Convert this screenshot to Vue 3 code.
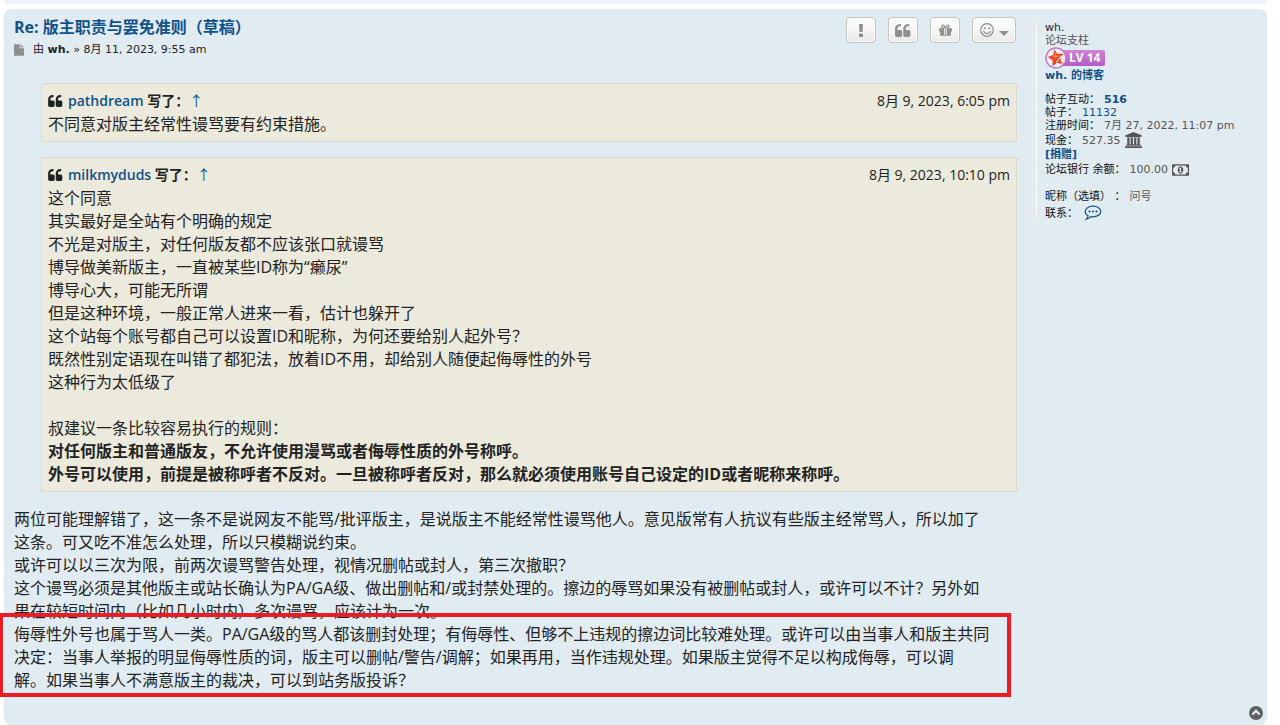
<script setup>
const quotes = [
  {
    author: 'pathdream',
    date: '8月 9, 2023, 6:05 pm',
    lines: [{ text: '不同意对版主经常性谩骂要有约束措施。' }],
  },
  {
    author: 'milkmyduds',
    date: '8月 9, 2023, 10:10 pm',
    lines: [
      { text: '这个同意' },
      { text: '其实最好是全站有个明确的规定' },
      { text: '不光是对版主，对任何版友都不应该张口就谩骂' },
      { text: '博导做美新版主，一直被某些ID称为“癞尿”' },
      { text: '博导心大，可能无所谓' },
      { text: '但是这种环境，一般正常人进来一看，估计也躲开了' },
      { text: '这个站每个账号都自己可以设置ID和昵称，为何还要给别人起外号？' },
      { text: '既然性别定语现在叫错了都犯法，放着ID不用，却给别人随便起侮辱性的外号' },
      { text: '这种行为太低级了' },
      { text: '' },
      { text: '叔建议一条比较容易执行的规则：' },
      { text: '对任何版主和普通版友，不允许使用漫骂或者侮辱性质的外号称呼。', bold: true },
      { text: '外号可以使用，前提是被称呼者不反对。一旦被称呼者反对，那么就必须使用账号自己设定的ID或者昵称来称呼。', bold: true },
    ],
  },
]

const reply = [
  '两位可能理解错了，这一条不是说网友不能骂/批评版主，是说版主不能经常性谩骂他人。意见版常有人抗议有些版主经常骂人，所以加了',
  '这条。可又吃不准怎么处理，所以只模糊说约束。',
  '或许可以以三次为限，前两次谩骂警告处理，视情况删帖或封人，第三次撤职？',
  '这个谩骂必须是其他版主或站长确认为PA/GA级、做出删帖和/或封禁处理的。擦边的辱骂如果没有被删帖或封人，或许可以不计？另外如',
  '果在较短时间内（比如几小时内）多次谩骂，应该计为一次。',
]

const marked = [
  '侮辱性外号也属于骂人一类。PA/GA级的骂人都该删封处理；有侮辱性、但够不上违规的擦边词比较难处理。或许可以由当事人和版主共同',
  '决定：当事人举报的明显侮辱性质的词，版主可以删帖/警告/调解；如果再用，当作违规处理。如果版主觉得不足以构成侮辱，可以调',
  '解。如果当事人不满意版主的裁决，可以到站务版投诉？',
]

const quotePath =
  'M704 960v384q0 80-56 136t-136 56h-384q-80 0-136-56t-56-136v-704q0-104 40-198t110-164 163-109 199-41h64q26 0 45 19t19 45v128q0 26-19 45t-45 19h-64q-106 0-181 75t-75 181v32q0 40 28 68t68 28h224q80 0 136 56t56 136z'
</script>

<template>
  <main class="page">
    <div class="previous"></div>
    <article class="post">
      <div class="columns">
        <section class="body">
          <header class="head">
            <div>
              <h1><a href="#post">Re: 版主职责与罢免准则（草稿）</a></h1>
              <p class="byline">
                <svg class="file" viewBox="128 0 1536 1792" aria-hidden="true">
                  <path d="M1152 512v-472q22 14 36 28l408 408q14 14 28 36h-472zm-128 32q0 40 28 68t68 28h544v1056q0 40-28 68t-68 28h-1344q-40 0-68-28t-28-68v-1600q0-40 28-68t68-28h800v544z" />
                </svg>
                <span>由 <a class="user" href="#wh">wh.</a> » 8月 11, 2023, 9:55 am</span>
              </p>
            </div>
            <div class="actions">
              <button type="button" aria-label="举报">
                <svg width="6" height="13" viewBox="0 0 6 13"><path d="M1 0h4l-.5 8h-3z" /><rect x="1" y="9.500" width="4" height="3.500" rx=".6" /></svg>
              </button>
              <button type="button" aria-label="引用">
                <svg width="16" height="13" viewBox="-64 128 1728 1408"><path :d="quotePath" /><path :d="quotePath" transform="translate(896 0)" /></svg>
              </button>
              <button type="button" aria-label="赠送">
                <svg width="15" height="15" viewBox="0 0 1792 1792"><path d="M1056 1356v-716h-320v716q0 25 18 38.500t46 13.500h192q28 0 46-13.500t18-38.500zm-456-844h195l-126-161q-26-31-69-31-40 0-68 28t-28 68 28 68 68 28zm688-96q0-40-28-68t-68-28q-43 0-69 31l-125 161h194q40 0 68-28t28-68zm376 256v320q0 14-9 23t-23 9h-96v416q0 40-28 68t-68 28h-1088q-40 0-68-28t-28-68v-416h-96q-14 0-23-9t-9-23v-320q0-14 9-23t23-9h440q-93 0-158.500-65.500t-65.500-158.500 65.500-158.500 158.500-65.500q107 0 168 77l128 165 128-165q61-77 168-77 93 0 158.500 65.500t65.500 158.500-65.500 158.500-158.500 65.500h440q14 0 23 9t9 23z" /><rect x="850" y="640" width="92" height="770" /></svg>
              </button>
              <button type="button" class="wide" aria-label="表情">
                <svg width="14" height="14" viewBox="0 0 14 14"><circle cx="7" cy="7" r="6.300" fill="none" stroke="#8f8f8f" stroke-width="1.200" /><circle cx="4.800" cy="5.200" r="1" /><circle cx="9.200" cy="5.200" r="1" /><path d="M3.500 8.300q1.200 2.300 3.500 2.300t3.500-2.300" fill="none" stroke="#8f8f8f" stroke-width="1.200" stroke-linecap="round" /></svg>
                <svg class="caret" width="10" height="5" viewBox="0 0 10 5"><path d="M0 0h10l-5 5z" /></svg>
              </button>
            </div>
          </header>

          <div class="content">
            <blockquote v-for="q in quotes" :key="q.author">
              <div class="cite">
                <svg width="15" height="12" viewBox="-64 128 1728 1408" aria-hidden="true"><path :d="quotePath" /><path :d="quotePath" transform="translate(896 0)" /></svg>
                <cite><a href="#author">{{ q.author }}</a> 写了：</cite>
                <a class="arrow" href="#source">↑</a>
                <time>{{ q.date }}</time>
              </div>
              <p v-for="(l, i) in q.lines" :key="i" :class="{ bold: l.bold }">{{ l.text }}</p>
            </blockquote>
            <p v-for="(l, i) in reply" :key="i">{{ l }}</p>
            <div class="marked">
              <p v-for="(l, i) in marked" :key="i">{{ l }}</p>
            </div>
          </div>
        </section>

        <aside class="profile">
          <div><a class="name" href="#wh">wh.</a></div>
          <div class="muted">论坛支柱</div>
          <div class="badge">
            <svg width="22" height="22" viewBox="0 0 22 22" aria-hidden="true">
              <circle cx="11" cy="11" r="10" fill="#fbf1f1" stroke="#b87bcd" stroke-width="1.500" />
              <path d="M9.500 3.200l2.800 4.100 5.500-.3-2.500 4.200 2.200 5.200-5-1.300-4.600 3.500.1-5.300-4.500-3.400 5-1.600z" fill="#ee4426" stroke="#d8321b" stroke-width=".6" />
              <path d="M9.600 5.300l1.900 3.400 3.500.1-3.400 1.800-5.300-.7 3-1z" fill="#ff8b51" />
              <path d="M12 15.500l3.300-4v6M11.800 15.500h4.700" fill="none" stroke="#fff" stroke-width="2.400" />
              <path d="M12.500 15.300l2.600-3v4.700M12.500 15.300h3.600" fill="none" stroke="#e43824" stroke-width="1.200" />
            </svg>
            <span>LV 14</span>
          </div>
          <div class="blog"><a class="strong" href="#blog">wh. 的博客</a></div>
          <dl>
            <div><dt>帖子互动：</dt><dd><a class="strong" href="#likes">516</a></dd></div>
            <div><dt>帖子：</dt><dd><a href="#posts">11132</a></dd></div>
            <div><dt>注册时间：</dt><dd>7月 27, 2022, 11:07 pm</dd></div>
            <div class="cash">
              <dt>现金：</dt>
              <dd>527.35
                <svg width="17" height="16" viewBox="0 0 1920 1792" aria-hidden="true"><path d="M960 0l960 384v128h-128q0 26-20 45t-49 19h-1526q-28 0-48-19t-21-45h-128v-128zm-704 640h256v768h128v-768h256v768h128v-768h256v768h128v-768h256v768h59q28 0 48 19t21 45v64h-1664v-64q0-26 20-45t49-19h59v-768zm1595 960q28 0 48 19t21 45v128h-1920v-128q0-26 20-45t49-19h1782z" /></svg>
              </dd>
            </div>
            <div><dd><a class="strong" href="#donate">[捐赠]</a></dd></div>
            <div class="bank">
              <dt>论坛银行 余额：</dt>
              <dd>100.00
                <svg width="17" height="16" viewBox="0 0 1920 1792" aria-hidden="true"><path d="M768 1152h384v-96h-128v-448h-114l-148 137 77 80q42-37 55-57h2v288h-128v96zm512-256q0 70-21 142t-59 134-102 101-138 39-138-39-102-101-59-134-21-142 21-142 59-134 102-101 138-39 138 39 102 101 59 134 21 142zm512 256v-512q-106 0-181-75t-75-181h-1152q0 106-75 181t-181 75v512q106 0 181 75t75 181h1152q0-106 75-181t181-75zm128-832v1152q0 26-19 45t-45 19h-1792q-26 0-45-19t-19-45v-1152q0-26 19-45t45-19h1792q26 0 45 19t19 45z" /></svg>
              </dd>
            </div>
            <div class="nick"><dt>昵称（选填） ：</dt><dd>问号</dd></div>
            <div class="contact">
              <dt>联系：</dt>
              <dd>
                <a href="#contact" aria-label="联系 wh.">
                  <svg width="18" height="16" viewBox="0 0 18 16"><path d="M9 1.200c4.300 0 7.800 2.300 7.800 5.300s-3.500 5.400-7.800 5.400q-1 0-2-.2-1.800 1.800-4.600 2.400 1.600-1.400 1.700-3.300c-1.800-1-2.900-2.500-2.900-4.300 0-3 3.500-5.300 7.800-5.300z" fill="none" stroke="#105289" stroke-width="1.200" /><circle cx="5.500" cy="6.500" r="1.100" /><circle cx="9" cy="6.500" r="1.100" /><circle cx="12.500" cy="6.500" r="1.100" /></svg>
                </a>
              </dd>
            </div>
          </dl>
        </aside>
      </div>
      <a class="top" href="#top" aria-label="页首">
        <svg width="14" height="14" viewBox="0 0 14 14"><circle cx="7" cy="7" r="7" fill="#606060" /><path d="M3.300 8.500l3.700-3.600 3.700 3.600" fill="none" stroke="#e1ebf2" stroke-width="2.200" /></svg>
      </a>
    </article>
  </main>
</template>

<style>
body {
  margin: 0;
  background: #fff;
}
</style>

<style scoped>
* {
  box-sizing: border-box;
}
.page {
  display: flex;
  flex-direction: column;
  gap: 5px;
  min-height: 100vh;
  padding: 0 13px 0 4px;
  color: #222;
  font-family: "DejaVu Sans", "Noto Sans CJK SC", sans-serif;
  font-size: 11px;
  line-height: 13px;
}
p, h1, dl, dd, blockquote {
  margin: 0;
}
a {
  color: #105289;
  text-decoration: none;
}
svg {
  display: block;
  fill: currentColor;
}
.previous {
  height: 4px;
  background: #ecf3f7;
  border-radius: 0 0 7px 7px;
}
.post {
  flex: 1;
  display: flex;
  flex-direction: column;
  padding: 8px 4px 5px 10px;
  background: #e1ebf2;
  border-radius: 7px;
}
.columns {
  display: flex;
  gap: 19px;
}
.body {
  flex: 1;
  min-width: 0;
}
.head {
  display: flex;
  justify-content: space-between;
  height: 50px;
}
h1 {
  font: bold 16px/20px "Open Sans", "Noto Sans CJK SC", sans-serif;
}
.byline {
  display: flex;
  align-items: center;
  gap: 9px;
  margin-top: 5px;
  line-height: 16px;
}
.file {
  width: 10px;
  height: 12px;
  color: #8f8f8f;
}
.user {
  color: #222;
  font-weight: bold;
}
.actions {
  display: flex;
  gap: 12px;
  padding-right: 1px;
}
.actions button {
  display: flex;
  align-items: center;
  justify-content: center;
  width: 30px;
  height: 26px;
  padding: 0;
  color: #8f8f8f;
  background: linear-gradient(#fff, #e9e9e9);
  border: 1px solid #c7c3bf;
  border-radius: 4px;
  box-shadow: inset 0 0 0 1px #fff;
}
.actions .wide {
  gap: 5px;
  width: 44px;
}
.caret {
  margin-top: 6px;
}
.content {
  padding-top: 16px;
  font: 16px/23px "Open Sans", "Noto Sans CJK SC", sans-serif;
  white-space: nowrap;
}
.content p {
  min-height: 23px;
}
blockquote {
  margin: 0 0 16px 27px;
  padding: 5px 6px;
  background: #ebeadd;
  border: 1px solid #dbdbce;
}
blockquote:first-child {
  margin-bottom: 15px;
}
.cite {
  display: flex;
  align-items: center;
  font-size: 14px;
  line-height: 24px;
}
.cite svg {
  margin-right: 5px;
}
cite {
  font-style: normal;
  font-weight: bold;
}
cite a {
  font-weight: 600;
}
time {
  margin-left: auto;
}
.bold {
  font-weight: bold;
}
.marked {
  position: relative;
}
.marked::after {
  content: "";
  position: absolute;
  inset: -10px 6px -5px -15px;
  border: 4px solid #ed1c24;
  pointer-events: none;
}
.profile {
  width: 227px;
  height: 200px;
  margin-top: 3px;
  padding: 1px 0 0 8px;
  border-left: 1px solid #fff;
  white-space: nowrap;
}
.name {
  color: #222;
}
.muted {
  color: #555;
}
.badge {
  display: flex;
  align-items: center;
  height: 22px;
}
.badge svg {
  position: relative;
  z-index: 1;
}
.badge span {
  width: 46px;
  margin-left: -8px;
  padding-left: 10px;
  color: #fff;
  background: linear-gradient(#cf86d8, #b659c6);
  border-radius: 2px;
  font: bold 12px/16px "Open Sans", sans-serif;
}
.blog {
  line-height: 14px;
}
.strong {
  font-weight: bold;
}
dl {
  margin-top: 10px;
}
dl div {
  display: flex;
  align-items: center;
}
dt {
  color: #111;
  margin-right: 4px;
}
dd {
  display: flex;
  align-items: center;
  gap: 4px;
  color: #555;
}
.cash {
  height: 16px;
}
.bank {
  height: 17px;
}
.nick {
  margin-top: 12px;
}
.contact {
  height: 20px;
}
.contact dd {
  margin-left: 2px;
}
.top {
  margin-top: auto;
  align-self: flex-end;
}
</style>
